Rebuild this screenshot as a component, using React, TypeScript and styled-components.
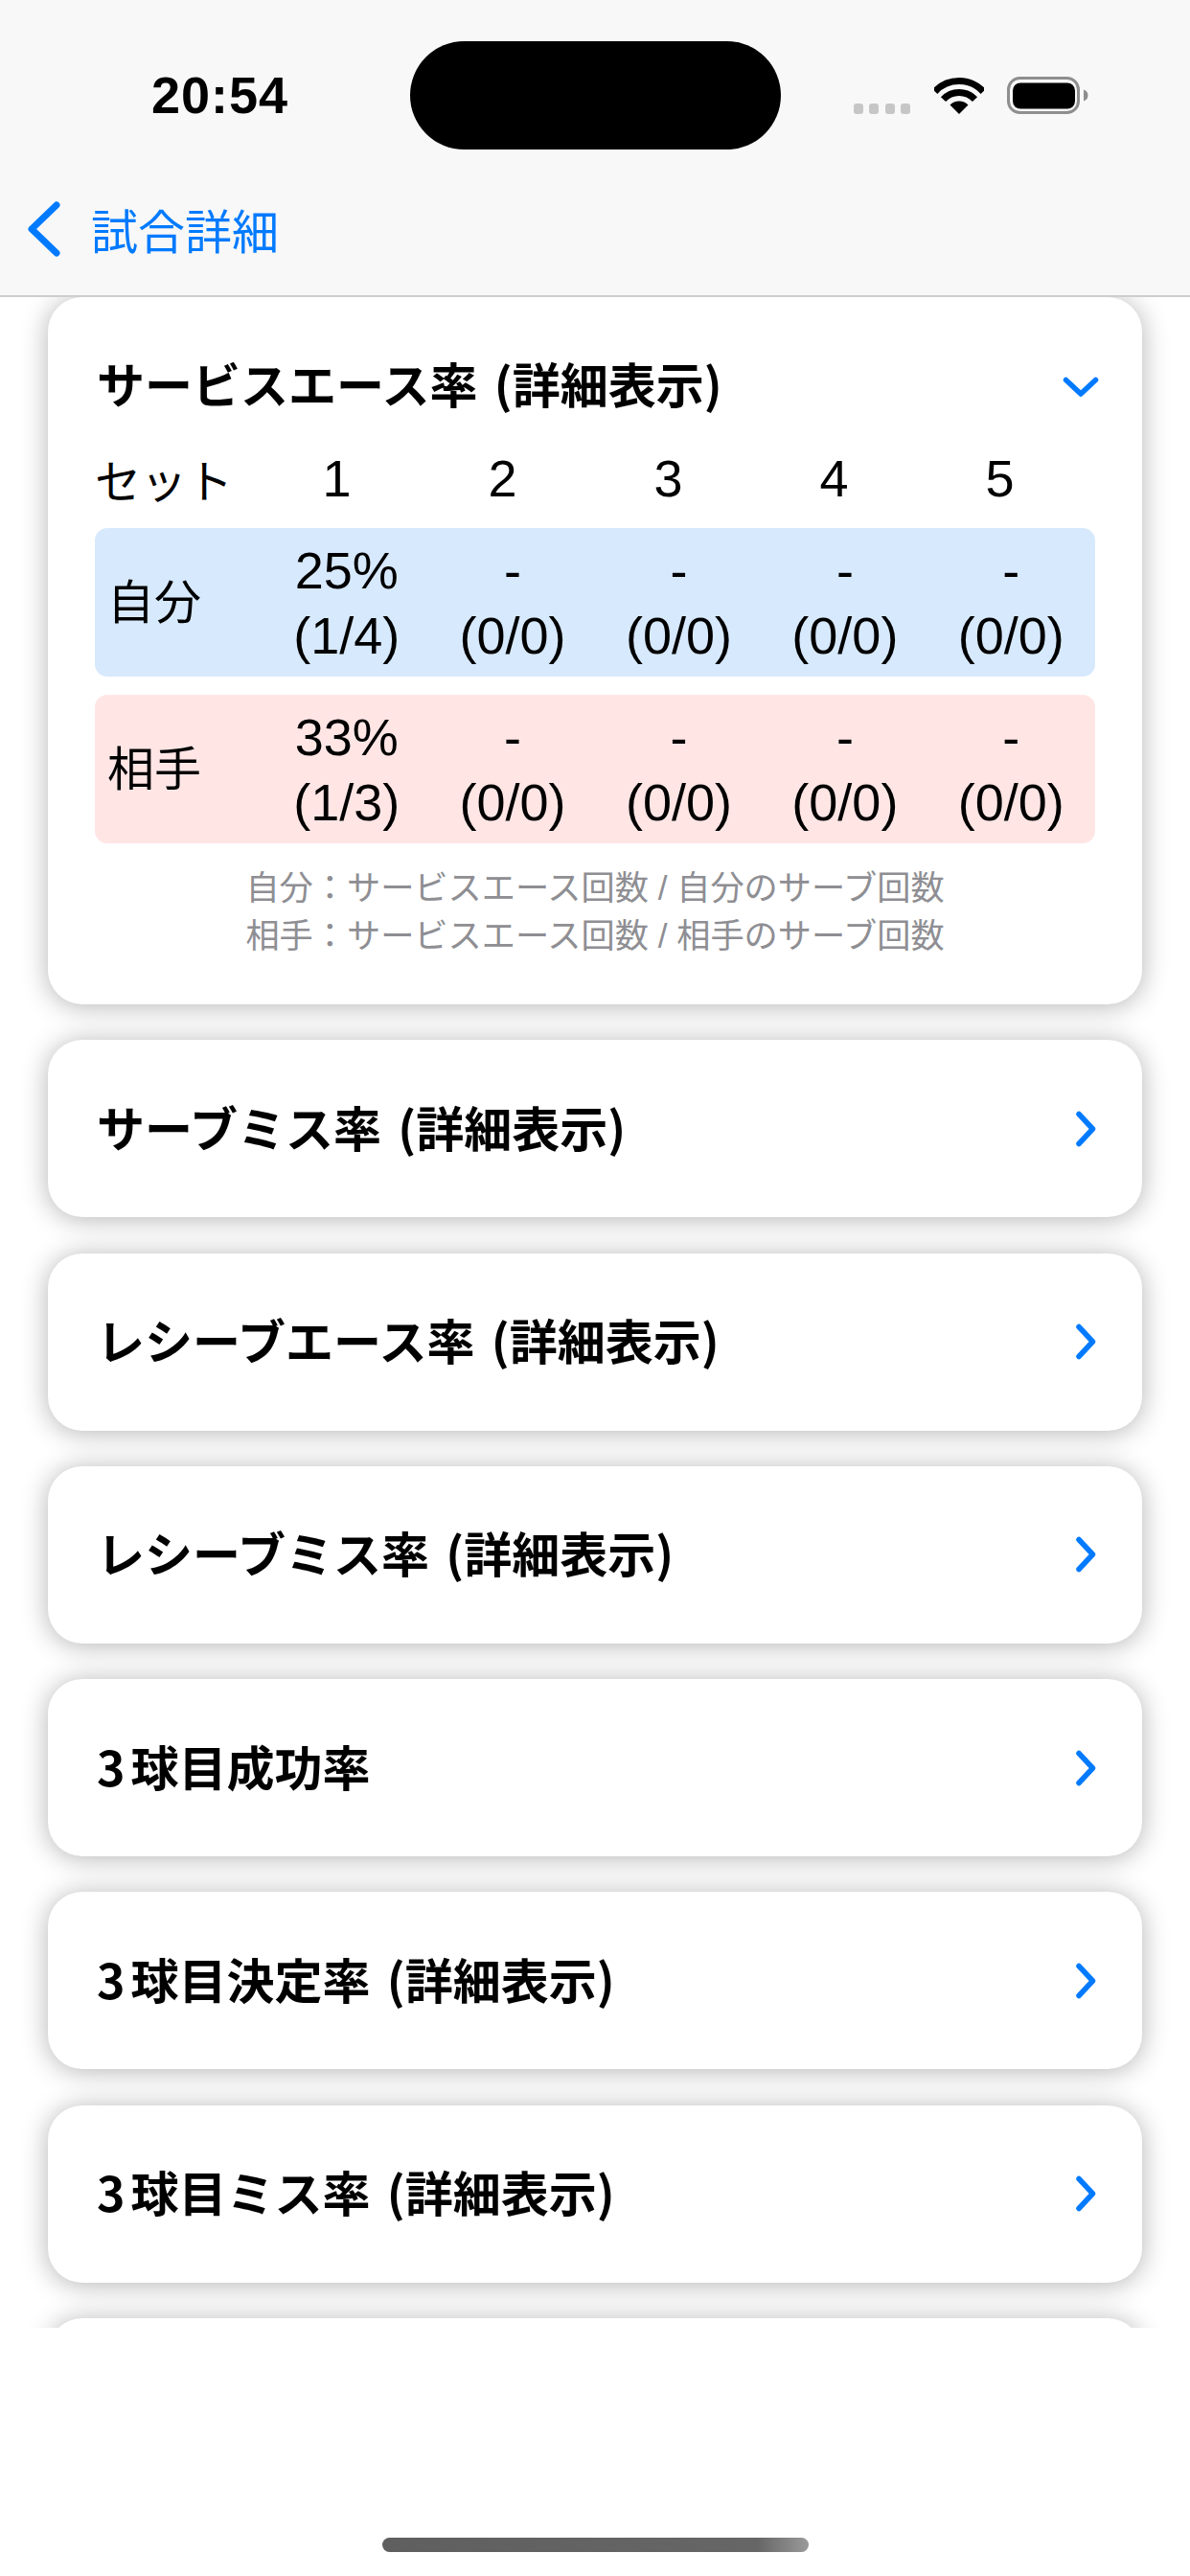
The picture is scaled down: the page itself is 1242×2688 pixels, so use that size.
import React from 'react';
import styled, {createGlobalStyle} from "styled-components";

const GlobalStyle = createGlobalStyle`
  html, body {
    margin: 0;
    padding: 0;
    background: #fff;
  }
  * {
    box-sizing: border-box;
  }
`;

const Screen = styled.div`
  width: 1242px;
  height: 2688px;
  display: flex;
  flex-direction: column;
  overflow: hidden;
  background: #fff;
  color: #000;
  font-family: "Liberation Sans", "Noto Sans CJK JP", sans-serif;
`;

const Header = styled.header`
  height: 310px;
  flex: none;
  background: #f8f8f8;
  border-bottom: 2px solid #cdcdcd;
`;

const StatusBar = styled.div`
  height: 199px;
  padding-top: 43px;
  display: flex;
  align-items: flex-start;
`;

const TimeSlot = styled.div`
  width: 428px;
  height: 113px;
  padding: 25px 0 0 158px;
  font-size: 54px;
  line-height: 62px;
  font-weight: 700;
  letter-spacing: 1px;
`;

const Island = styled.div`
  width: 387px;
  height: 113px;
  border-radius: 57px;
  background: #000;
`;

const StatusIcons = styled.div`
  height: 77px;
  padding-left: 76px;
  display: flex;
  align-items: flex-end;
`;

const SignalDots = styled.div`
  display: flex;
  gap: 6.4px;
  margin-bottom: 1px;
`;

const SignalDot = styled.span`
  width: 10px;
  height: 11px;
  border-radius: 3px;
  background: #c6c6c6;
`;

const Wifi = styled.svg`
  width: 52px;
  height: 38px;
  margin: 0 0 1px 25px;
`;

const Battery = styled.svg`
  width: 85px;
  height: 40px;
  margin-left: 24px;
`;

const NavBar = styled.div`
  height: 109px;
  display: flex;
  align-items: center;
  padding: 0 0 30px 29px;
  color: #007aff;
  font-size: 49px;
`;

const BackIcon = styled.svg`
  width: 35px;
  height: 58px;
  margin-right: 31px;
`;

const Content = styled.main`
  height: 2119px;
  flex: none;
  overflow: hidden;
  padding: 0 50px;
  display: flex;
  flex-direction: column;
  gap: 37.3px;
`;

const Card = styled.section`
  flex: none;
  background: #fff;
  border-radius: 36px;
  box-shadow: 0 2px 28px rgba(0, 0, 0, .3);
`;

const CollapsedCard = styled(Card)`
  height: 185px;
  padding: 0 47px 0 51px;
  display: flex;
  align-items: center;
  justify-content: space-between;
`;

const ExpandedCard = styled(Card)`
  height: 738px;
  padding: 61px 49px 0;
`;

const TitleRow = styled.div`
  height: 62px;
  padding: 0 0 0 2px;
  margin-right: -4px;
  display: flex;
  align-items: center;
  justify-content: space-between;
`;

const Title = styled.span`
  padding-bottom: 6px;
  font-family: "Noto Sans CJK JP", sans-serif;
  font-size: 50px;
  font-weight: 700;
  word-spacing: 6px;
`;

const Num = styled.span`
  font-feature-settings: "pwid";
  letter-spacing: 6px;
`;

const ChevronDown = styled.svg`
  width: 38px;
  height: 24px;
  margin-top: 4px;
`;

const ChevronRight = styled.svg`
  width: 24px;
  height: 38px;
`;

const SetHeader = styled.div`
  height: 60px;
  margin-top: 31px;
  padding-right: 14px;
  display: grid;
  grid-template-columns: 166px repeat(5, 173px);
  align-items: center;
  font-size: 54px;
  text-align: center;
`;

const SetLabel = styled.span`
  font-size: 48px;
  text-align: left;
`;

const SetRow = styled.div<{$tone: string}>`
  height: 155px;
  margin-top: ${p => p.$tone === 'self' ? '27px' : '19px'};
  border-radius: 13px;
  background: ${p => p.$tone === 'self' ? '#d7e9fd' : '#ffe6e5'};
  display: grid;
  grid-template-columns: 176px repeat(5, 173.4px);
  align-items: center;
  font-size: 54px;
  line-height: 68px;
  text-align: center;
`;

const RowLabel = styled.span`
  font-size: 49px;
  text-align: left;
  padding-left: 13px;
`;

const Cell = styled.div`
  display: flex;
  flex-direction: column;
  align-items: center;
  white-space: nowrap;
`;

const Note = styled.p`
  margin: 22px 0 0;
  font-size: 35.2px;
  line-height: 49.5px;
  color: #8e8e93;
  text-align: center;
`;

const Footer = styled.footer`
  flex: 1;
  padding-top: 219px;
  display: flex;
  justify-content: center;
`;

const HomeIndicator = styled.div`
  width: 445px;
  height: 15px;
  border-radius: 8px;
  background: linear-gradient(to right, #5f5f5f 0%, #666 88%, #9a9a9a 100%);
`;

const selfCells = [['25%', '(1/4)'], ['-', '(0/0)'], ['-', '(0/0)'], ['-', '(0/0)'], ['-', '(0/0)']];
const rivalCells = [['33%', '(1/3)'], ['-', '(0/0)'], ['-', '(0/0)'], ['-', '(0/0)'], ['-', '(0/0)']];

const collapsedTitles: React.ReactNode[] = [
  'サーブミス率 (詳細表示)',
  'レシーブエース率 (詳細表示)',
  'レシーブミス率 (詳細表示)',
  <><Num>３</Num>球目成功率</>,
  <><Num>３</Num>球目決定率 (詳細表示)</>,
  <><Num>３</Num>球目ミス率 (詳細表示)</>,
  '',
];

const renderCells = (cells: string[][]) => cells.map((lines, i) => (
  <Cell key={i}>
    <span>{lines[0]}</span>
    <span>{lines[1]}</span>
  </Cell>
));

const App: React.FC = () => {
  return (
    <Screen>
      <GlobalStyle/>
      <Header>
        <StatusBar>
          <TimeSlot>20:54</TimeSlot>
          <Island/>
          <StatusIcons>
            <SignalDots>
              {[0, 1, 2, 3].map(i => <SignalDot key={i}/>)}
            </SignalDots>
            <Wifi viewBox="0 0 52 38">
              <path d="M0.8 14.5A34.5 34.5 0 0 1 51.2 14.5" fill="none" stroke="#000" strokeWidth="7"/>
              <path d="M9.5 22.7A22.5 22.5 0 0 1 42.5 22.7" fill="none" stroke="#000" strokeWidth="7"/>
              <path d="M26 38L16.5 28.5A13.4 13.4 0 0 1 35.5 28.5Z" fill="#000"/>
            </Wifi>
            <Battery viewBox="0 0 85 40">
              <rect x="1.5" y="1.5" width="73" height="36" rx="12" fill="none" stroke="#8e8e8e" strokeWidth="3"/>
              <rect x="6" y="6.5" width="65" height="27" rx="8" fill="#000"/>
              <path d="M80 13.5C83 14.5 84.5 16.5 84.5 19.5S83 24.5 80 25.5Z" fill="#8e8e8e"/>
            </Battery>
          </StatusIcons>
        </StatusBar>
        <NavBar>
          <BackIcon viewBox="0 0 35 58">
            <path d="M30 4L4 29L30 54" fill="none" stroke="#007aff" strokeWidth="7" strokeLinecap="round" strokeLinejoin="round"/>
          </BackIcon>
          試合詳細
        </NavBar>
      </Header>
      <Content>
        <ExpandedCard>
          <TitleRow>
            <Title>サービスエース率 (詳細表示)</Title>
            <ChevronDown viewBox="0 0 38 24">
              <path d="M3.5 4.5L19 19L34.5 4.5" fill="none" stroke="#007aff" strokeWidth="5.5" strokeLinecap="round" strokeLinejoin="round"/>
            </ChevronDown>
          </TitleRow>
          <SetHeader>
            <SetLabel>セット</SetLabel>
            {[1, 2, 3, 4, 5].map(n => <span key={n}>{n}</span>)}
          </SetHeader>
          <SetRow $tone="self">
            <RowLabel>自分</RowLabel>
            {renderCells(selfCells)}
          </SetRow>
          <SetRow $tone="rival">
            <RowLabel>相手</RowLabel>
            {renderCells(rivalCells)}
          </SetRow>
          <Note>
            自分：サービスエース回数 / 自分のサーブ回数<br/>
            相手：サービスエース回数 / 相手のサーブ回数
          </Note>
        </ExpandedCard>
        {collapsedTitles.map((title, i) => (
          <CollapsedCard key={i}>
            <Title>{title}</Title>
            <ChevronRight viewBox="0 0 24 38">
              <path d="M5 3.5L19.5 19L5 34.5" fill="none" stroke="#007aff" strokeWidth="5.5" strokeLinecap="round" strokeLinejoin="round"/>
            </ChevronRight>
          </CollapsedCard>
        ))}
      </Content>
      <Footer>
        <HomeIndicator/>
      </Footer>
    </Screen>
  );
};

export default App;
